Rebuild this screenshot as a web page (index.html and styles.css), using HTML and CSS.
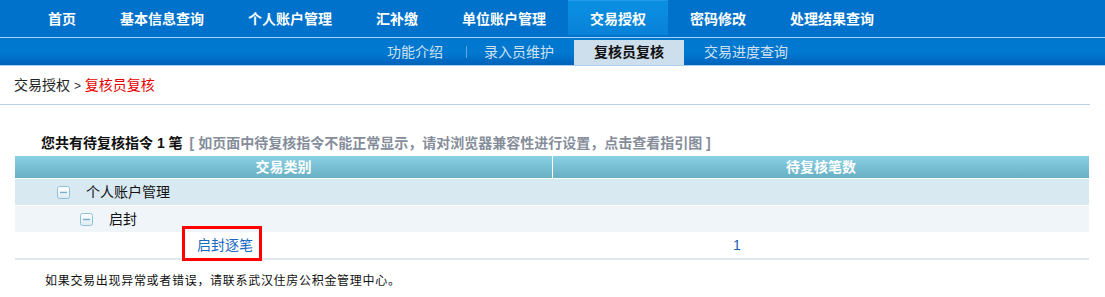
FILE: index.html
```html
<!DOCTYPE html>
<html lang="zh-CN">
<head>
<meta charset="utf-8">
<title>复核员复核</title>
<link rel="stylesheet" href="styles.css">
</head>
<body>
<div class="page">
  <nav class="topnav">
    <a class="nav-item">首页</a>
    <a class="nav-item">基本信息查询</a>
    <a class="nav-item">个人账户管理</a>
    <a class="nav-item">汇补缴</a>
    <a class="nav-item">单位账户管理</a>
    <a class="nav-item active">交易授权</a>
    <a class="nav-item">密码修改</a>
    <a class="nav-item">处理结果查询</a>
  </nav>
  <nav class="subnav">
    <a class="sub-item">功能介绍</a>
    <span class="sep"></span>
    <a class="sub-item">录入员维护</a>
    <a class="sub-item active">复核员复核</a>
    <a class="sub-item">交易进度查询</a>
  </nav>
  <div class="crumb">交易授权 <span class="gt">&gt;</span> <span class="cur">复核员复核</span></div>
  <div class="content">
    <div class="title">您共有待复核指令 1 笔<span class="hint">[ 如页面中待复核指令不能正常显示，请对浏览器兼容性进行设置，点击查看指引图 ]</span></div>
    <table class="grid">
      <thead>
        <tr><th class="c1">交易类别</th><th class="c2">待复核笔数</th></tr>
      </thead>
      <tbody>
        <tr class="lv1"><td colspan="2"><svg class="tog" width="13" height="13" viewBox="0 0 13 13"><defs><linearGradient id="g1" x1="0" y1="0" x2="0" y2="1"><stop offset="0" stop-color="#ffffff"/><stop offset="1" stop-color="#dcebf3"/></linearGradient></defs><rect x="0.5" y="0.5" width="12" height="12" rx="2" fill="url(#g1)" stroke="#8fc0d8"/><line x1="3" y1="6.5" x2="10" y2="6.5" stroke="#78aecb" stroke-width="1.4"/></svg>个人账户管理</td></tr>
        <tr class="lv2"><td colspan="2"><svg class="tog" width="13" height="13" viewBox="0 0 13 13"><defs><linearGradient id="g2" x1="0" y1="0" x2="0" y2="1"><stop offset="0" stop-color="#ffffff"/><stop offset="1" stop-color="#dcebf3"/></linearGradient></defs><rect x="0.5" y="0.5" width="12" height="12" rx="2" fill="url(#g2)" stroke="#8fc0d8"/><line x1="3" y1="6.5" x2="10" y2="6.5" stroke="#78aecb" stroke-width="1.4"/></svg>启封</td></tr>
        <tr class="lv3"><td class="name"><a class="link">启封逐笔<span class="mark"></span></a></td><td class="num">1</td></tr>
      </tbody>
    </table>
    <p class="note">如果交易出现异常或者错误，请联系武汉住房公积金管理中心。</p>
  </div>
</div>
</body>
</html>
```
FILE: styles.css
```css
* { box-sizing: border-box; }
html, body { margin: 0; padding: 0; background: #fff; }
body {
  font-family: "Liberation Sans", "Noto Sans CJK SC", sans-serif;
  font-size: 14px;
  color: #111;
}
a { text-decoration: none; cursor: pointer; }

.topnav {
  display: flex;
  align-items: flex-start;
  height: 38px;
  padding-left: 26px;
  background: #0072cc;
  border-bottom: 1px solid #a3d2f4;
}
.nav-item {
  height: 35px;
  padding: 4px 22px 0;
  line-height: 31px;
  color: #fff;
  font-weight: bold;
  font-size: 14px;
  white-space: nowrap;
}
.nav-item.active {
  background: linear-gradient(to bottom, #3aa6ec 0, #0a90e2 1px, #0882d8 100%);
}

.subnav {
  display: flex;
  align-items: flex-end;
  height: 28px;
  padding-left: 367px;
  background: linear-gradient(to bottom, #0078d0 0%, #0078d0 55%, #0062ba 100%);
  border-bottom: 1px solid #a8cef0;
}
.sub-item {
  height: 25px;
  line-height: 25px;
  padding: 0 20px;
  color: #d2e1f0;
  font-size: 14px;
  white-space: nowrap;
}
.sub-item.active {
  background: #cddeed;
  color: #111;
  font-weight: bold;
}
.sep {
  align-self: center;
  width: 1px;
  height: 12px;
  margin: 0 -3px 0 3px;
  background: #5ea8e2;
}

.crumb {
  height: 39px;
  line-height: 38px;
  margin-right: 15px;
  padding-left: 14px;
  border-bottom: 1px solid #b9d0e4;
  color: #222;
}
.crumb .gt { color: #334; font-size: 12px; }
.crumb .cur { color: #e60000; }

.content {
  padding: 28px 16px 0 15px;
}
.title {
  line-height: 20px;
  padding-left: 26px;
  margin-bottom: 3px;
  font-weight: bold;
  color: #111;
}
.title .hint {
  margin-left: 7px;
  color: #858d9a;
}

.grid {
  width: 100%;
  border-collapse: separate;
  border-spacing: 0;
}
.grid th {
  height: 22px;
  padding: 0;
  background: linear-gradient(to bottom, #88d0e3 0%, #6aafc4 100%);
  color: #fff;
  font-weight: bold;
  font-size: 14px;
  line-height: 22px;
  text-align: center;
}
.grid th.c1 { width: 538px; border-right: 1px solid #fff; }
.grid td {
  height: 27px;
  padding: 0;
  border-top: 1px solid #fff;
  line-height: 26px;
  vertical-align: middle;
}
.lv1 td { background: #d9e9f2; padding-left: 42px; }
.lv2 td { background: #f0f5fa; padding-left: 65px; }
.lv3 td { background: #fff; height: 28px; border-top: 0; border-bottom: 2px solid #e0e8f0; }
.tog { vertical-align: -2px; margin-right: 16px; }
.lv3 td.name { padding-left: 182px; }
.lv3 td.num { padding-left: 180px; color: #2060b0; }
.link {
  position: relative;
  display: inline-block;
  line-height: 20px;
  color: #1769c4;
}
.mark {
  position: absolute;
  left: -15px;
  top: -9px;
  width: 80px;
  height: 35px;
  border: 3px solid #f00;
}

.note {
  margin: 11px 0 0;
  padding-left: 30px;
  line-height: 20px;
  font-size: 12px;
  letter-spacing: 0.7px;
  color: #111;
}
```
